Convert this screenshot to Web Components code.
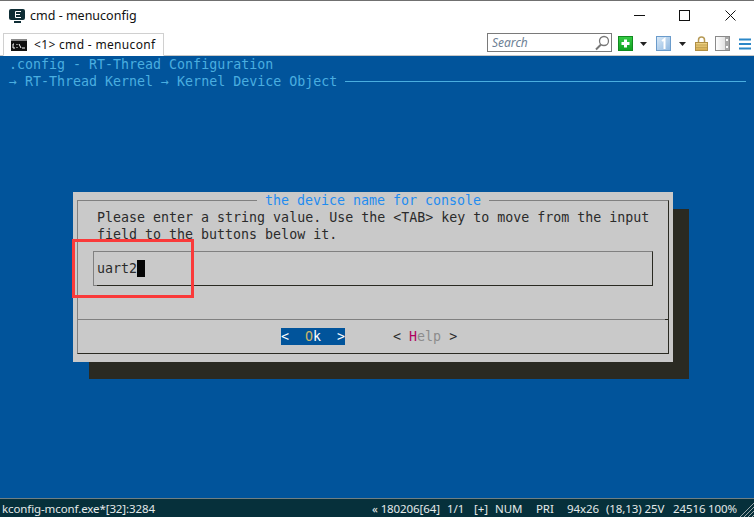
<!DOCTYPE html>
<html>
<head>
<meta charset="utf-8">
<title>cmd - menuconfig</title>
<style>
html, body { margin: 0; padding: 0; overflow: hidden; background: #fff; }
</style>
</head>
<body>
<con-window>
  <title-bar slot="title">cmd - menuconfig</title-bar>
  <tab-bar slot="tabs"></tab-bar>
  <term-view slot="term">
    <kconfig-dialog heading="the device name for console" value="uart2">Please enter a string value. Use the &lt;TAB&gt; key to move from the input<br>field to the buttons below it.</kconfig-dialog>
  </term-view>
  <status-bar slot="status"></status-bar>
</con-window>

<script>
"use strict";
const make = (name, html) => {
    const template = document.createElement("template");
    template.innerHTML = html;
    customElements.define(name, class extends HTMLElement {
        constructor() {
            super();
            this.attachShadow({ mode: "open" });
            this.shadowRoot.appendChild(template.content.cloneNode(true));
        }
    });
};

make("con-window", `
    <style>
        :host { display: flex; flex-direction: column; width: 754px; height: 517px; }
    </style>
    <slot name="title"></slot>
    <slot name="tabs"></slot>
    <slot name="term"></slot>
    <slot name="status"></slot>
`);

make("title-bar", `
    <style>
        :host {
            display: flex; align-items: center; height: 28px; padding-bottom: 2px;
            border-top: 1px solid #707070; background: #fff;
            font: 12.5px "Noto Sans", "Open Sans", sans-serif; color: #111;
        }
        .logo { margin: 2px 5px 0 9px; flex: none; }
        .grow { flex: 1; }
        svg.btn { flex: none; display: block; margin-top: 1px; }
        .min { margin-right: 34px; }
        .max { margin-right: 35px; }
        .close { margin-right: 18px; }
    </style>
    <svg class="logo" width="16" height="14" viewBox="0 0 16 14">
        <rect x="0" y="0" width="16" height="11" rx="2" fill="#0e2d35"/>
        <rect x="5" y="12" width="7" height="2" fill="#0e2d35"/>
        <path d="M12 2.500H6.500V8.500H12M6.500 5.500H11" stroke="#fff" fill="none"/>
    </svg>
    <slot></slot>
    <span class="grow"></span>
    <svg class="btn min" width="11" height="11" viewBox="0 0 11 11"><path d="M0 5.500h11" stroke="#111"/></svg>
    <svg class="btn max" width="11" height="11" viewBox="0 0 11 11"><rect x=".5" y=".5" width="10" height="10" fill="none" stroke="#111"/></svg>
    <svg class="btn close" width="11" height="11" viewBox="0 0 11 11"><path d="M.5 .5l10 10M10.500 .5l-10 10" stroke="#111"/></svg>
`);

make("tab-bar", `
    <style>
        :host {
            display: flex; align-items: flex-end; height: 25px; box-sizing: border-box;
            padding-left: 3px; background: #fff; border-bottom: 1px solid #c8c8c8;
            font: 12px "Noto Sans", "Open Sans", sans-serif; color: #111;
        }
        .tab {
            display: flex; align-items: center; width: 161px; height: 23px; box-sizing: border-box;
            margin-bottom: -1px; padding-left: 7px; letter-spacing: .33px;
            border: 1px solid #d0d0d0; border-bottom: 1px solid #fff; background: #fff; white-space: nowrap;
        }
        .tab svg { margin-right: 7px; flex: none; }
        .search {
            display: flex; align-items: center; justify-content: space-between; box-sizing: border-box;
            width: 125px; height: 19px; margin-left: 323px; margin-bottom: 3px; padding: 0 1px 0 4px;
            border: 1px solid #7a7a7a; background: #fff; color: #6d7f95; font-style: italic;
        }
        .tools { display: flex; align-items: center; margin-bottom: 4px; }
        .tools svg { display: block; flex: none; }
    </style>
    <div class="tab">
        <svg width="16" height="12" viewBox="0 0 16 12">
            <rect width="16" height="12" fill="#111"/>
            <rect x="0" y="0" width="16" height="2" fill="#8a8a8a"/>
            <path d="M3 5H2v4h2M6 5v1M6 8v1M8 5l2 4M11 9h3" stroke="#fff" fill="none"/>
        </svg>
        &lt;1&gt; cmd - menuconf
    </div>
    <div class="search">
        <span>Search</span>
        <svg width="16" height="16" viewBox="0 0 16 16"><circle cx="10" cy="6" r="4.500" fill="none" stroke="#777" stroke-width="1.3"/><path d="M7 9.500L2 14.500" stroke="#777" stroke-width="2"/></svg>
    </div>
    <div class="tools">
        <svg style="margin-left:6px" width="15" height="15" viewBox="0 0 15 15">
            <defs>
                <linearGradient id="g" x1="0" y1="0" x2="0" y2="1"><stop offset="0" stop-color="#35cc45"/><stop offset="1" stop-color="#10a020"/></linearGradient>
                <linearGradient id="b" x1="0" y1="0" x2="1" y2="1"><stop offset="0" stop-color="#dcebf8"/><stop offset="1" stop-color="#8db6df"/></linearGradient>
                <linearGradient id="y" x1="0" y1="0" x2="0" y2="1"><stop offset="0" stop-color="#f0d68a"/><stop offset="1" stop-color="#d2a94e"/></linearGradient>
                <linearGradient id="p" x1="0" y1="0" x2="1" y2="0"><stop offset="0" stop-color="#ffffff"/><stop offset="1" stop-color="#d5d5d5"/></linearGradient>
            </defs>
            <rect x=".5" y=".5" width="14" height="14" fill="url(#g)" stroke="#128a20"/>
            <path d="M7.500 3.500v8M3.500 7.500h8" stroke="#fff" stroke-width="3"/>
        </svg>
        <svg style="margin-left:7px" width="7" height="4" viewBox="0 0 7 4"><path d="M0 0h7L3.500 4z" fill="#222"/></svg>
        <svg style="margin-left:9px" width="15" height="15" viewBox="0 0 15 15">
            <rect x=".5" y=".5" width="14" height="14" fill="url(#b)" stroke="#6a9bcb"/>
            <path d="M6 5l2.500-2v10" stroke="#fff" stroke-width="2" fill="none"/>
        </svg>
        <svg style="margin-left:8px" width="7" height="4" viewBox="0 0 7 4"><path d="M0 0h7L3.500 4z" fill="#222"/></svg>
        <svg style="margin-left:9px" width="13" height="15" viewBox="0 0 13 15">
            <path d="M3.500 7V4a3 3 0 0 1 6 0v3" fill="none" stroke="#b69a55" stroke-width="1.5"/>
            <rect x=".5" y="6.500" width="12" height="8" fill="url(#y)" stroke="#b08f45"/>
            <path d="M1 9h11M1 11.500h11" stroke="#c5a555"/>
        </svg>
        <svg style="margin-left:7px" width="15" height="15" viewBox="0 0 15 15">
            <rect x=".5" y=".5" width="14" height="14" fill="url(#p)" stroke="#8a8a8a"/>
            <rect x="10" y="1" width="4" height="13" fill="#a8a8a8"/>
            <rect x="11" y="3" width="2" height="2" fill="#fff"/><rect x="11" y="10" width="2" height="2" fill="#fff"/>
        </svg>
        <svg style="margin-left:9px" width="12" height="12" viewBox="0 0 12 12">
            <path d="M0 1.500h12M0 6h12M0 10.500h12" stroke="#2b87c8" stroke-width="2"/>
        </svg>
    </div>
`);

make("term-view", `
    <style>
        :host {
            display: block; flex: 1; min-height: 0; box-sizing: border-box; padding-left: 1px; background: #01549b;
            font: 13.3px/17px "DejaVu Sans Mono", monospace; color: #4aaee0;
        }
        .row { height: 17px; padding-left: 8px; display: flex; align-items: center; }
        .line { flex: none; width: 401px; height: 1px; margin-left: 8px; background: currentColor; }
        .holder { margin: 102px 0 0 72px; }
    </style>
    <div class="row">.config - RT-Thread Configuration</div>
    <div class="row"><span>→ RT-Thread Kernel → Kernel Device Object</span><span class="line"></span></div>
    <div class="holder"><slot></slot></div>
`);

customElements.define("kconfig-dialog", class extends HTMLElement {
    constructor() {
        super();
        this.attachShadow({ mode: "open" });
    }
    connectedCallback() {
        this.shadowRoot.innerHTML = `
            <style>
                :host {
                    display: block; width: 600px; height: 170px; box-sizing: border-box; position: relative;
                    padding: 8px 4px 8px 4px; background: #c9c9c9; color: #2b2b2b;
                    box-shadow: 16px 17px 0 #2a2a22;
                }
                .frame {
                    display: flex; flex-direction: column; height: 154px; box-sizing: border-box;
                    border: 1px solid #2a2a22; border-top-color: #808080; border-left-color: #808080;
                }
                .title { align-self: center; height: 17px; margin-top: -9px; padding: 0 8px; background: #c9c9c9; color: #1f8cf0; }
                .text { padding-left: 19px; }
                .input {
                    height: 35px; box-sizing: border-box; margin: 8px 15px 0 15px; padding: 8px 0 0 3px;
                    border: 1px solid #2a2a22; border-top-color: #808080; border-left-color: #808080;
                    display: flex; position: relative;
                }
                .input::after { content: ""; position: absolute; left: -1px; bottom: -1px; width: 4px; height: 1px; background: #808080; }
                .cursor { display: block; width: 8px; height: 17px; background: #050505; }
                .rule { height: 1px; margin-top: 33px; background: linear-gradient(to right, #808080 calc(100% - 3px), #2a2a22 0); }
                .buttons { display: flex; gap: 48px; padding: 8px 0 8px 203px; white-space: pre; }
                .ok { background: #01549b; color: #fff; }
                .ok b { font-weight: normal; color: #c9b66a; }
                .help i { font-style: normal; color: #8c8c8c; }
                .help b { font-weight: normal; color: #b0005f; }
                .mark {
                    position: absolute; left: -1px; top: 47px; width: 122px; height: 59px; box-sizing: border-box;
                    border: 3px solid #fa3a3a;
                }
            </style>
            <div class="frame">
                <div class="title">${this.getAttribute("heading")}</div>
                <div class="text"><slot></slot></div>
                <div class="input"><span>${this.getAttribute("value")}</span><span class="cursor"></span></div>
                <div class="rule"></div>
                <div class="buttons"><span class="ok">&lt;  <b>O</b>k  &gt;</span><span class="help">&lt; <b>H</b><i>elp</i> &gt;</span></div>
            </div>
            <div class="mark"></div>
        `;
    }
});

make("status-bar", `
    <style>
        :host {
            display: flex; align-items: center; height: 19px; box-sizing: border-box;
            border-top: 1px solid #6f7f84; background: #06303b; color: #e4eaea;
            font: 11.5px "Noto Sans", "Open Sans", sans-serif; letter-spacing: -.1px; white-space: nowrap; overflow: hidden;
        }
        span { flex: none; display: block; }
        svg { flex: none; display: block; align-self: flex-end; }
    </style>
    <span style="margin-left:2px;width:370px">kconfig-mconf.exe*[32]:3284</span>
    <span style="width:75px">« 180206[64]</span>
    <span style="width:27px">1/1</span>
    <span style="width:21px">[+]</span>
    <span style="width:41px">NUM</span>
    <span style="width:31px">PRI</span>
    <span style="width:39px">94x26</span>
    <span style="width:67px">(18,13) 25V</span>
    <span style="width:35px">24516</span>
    <span style="width:30px">100%</span>
    <svg width="16" height="16" viewBox="0 0 16 16"><path d="M16 2L2 16M16 6L6 16M16 10L10 16M16 14L14 16" stroke="#9aa5a8"/></svg>
`);
</script>
</body>
</html>
